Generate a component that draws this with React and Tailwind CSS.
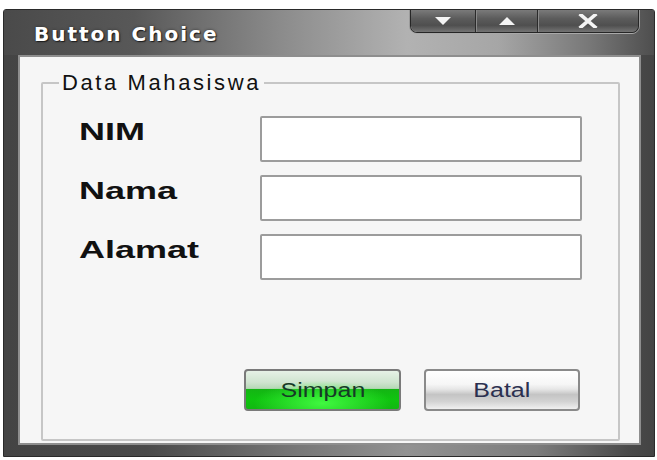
import { useState } from "react";

// Small window-chrome glyphs for the caption buttons
const ArrowDown = () => (
  <svg width="16" height="9" viewBox="0 0 16 9">
    <polygon points="0,0 16,0 8,8" fill="#f4f4f4" />
  </svg>
);

const ArrowUp = () => (
  <svg width="16" height="9" viewBox="0 0 16 9">
    <polygon points="0,8 16,8 8,0" fill="#f4f4f4" />
  </svg>
);

const CloseX = () => (
  <svg width="20" height="14" viewBox="0 0 20 14">
    <path d="M3 1 L17 13 M17 1 L3 13" stroke="#f4f4f4" strokeWidth="3.6" strokeLinecap="square" />
  </svg>
);

const CaptionButton = ({ width, children, first }) => (
  <button
    className={`flex items-center justify-center h-full bg-[linear-gradient(180deg,#7a7a7a_0%,#5b5b5b_40%,#4f4f4f_70%,#747474_100%)] ${
      first ? "" : "border-l border-[#2a2a2a] shadow-[inset_1px_0_0_#8a8a8a]"
    } ${width}`}
  >
    {children}
  </button>
);

const Field = ({ label, value, onChange }) => (
  <>
    <label className="mt-[4px] text-[24px] leading-[24px] font-bold text-[#111] font-['Liberation_Sans',Arial,sans-serif]">
      <span className="inline-block origin-left scale-x-150">{label}</span>
    </label>
    <input
      value={value}
      onChange={(e) => onChange(e.target.value)}
      className="h-[46px] w-[322px] bg-white border-2 border-[#9c9c9c] rounded-[2px] px-2 text-[16px] outline-none"
    />
  </>
);

export default function App() {
  const [nim, setNim] = useState("");
  const [nama, setNama] = useState("");
  const [alamat, setAlamat] = useState("");

  return (
    <div className="w-[657px] h-[460px] bg-white pt-[9px] pl-[3px] overflow-hidden">
      {/* window frame */}
      <div className="w-[652px] h-[448px] flex flex-col border border-[#2a2a2a] rounded-t-[3px] bg-[linear-gradient(90deg,#444_0%,#4a4a4a_22%,#777_45%,#929292_62%,#7c7c7c_82%,#4a4a4a_96%,#444_100%)]">
        {/* title bar */}
        <div className="h-[45px] shrink-0 flex items-start justify-between bg-[linear-gradient(90deg,#4a4a4a_0%,#585858_20%,#8a8a8a_42%,#b2b2b2_62%,#a6a6a6_76%,#787878_90%,#4e4e4e_100%)]">
          <div className="pl-[30px] pt-[12px] text-[20px] leading-[24px] font-bold tracking-[2px] text-white font-['DejaVu_Sans',Verdana,sans-serif] [text-shadow:1px_1px_1px_#1c1c1c,0_0_3px_#333]">
            Button Choice
          </div>
          <div className="mr-[15px] h-[23px] flex border border-t-0 border-[#262626] rounded-b-[7px] overflow-hidden shadow-[0_1px_0_#a9a9a9,1px_0_0_#9a9a9a,-1px_0_0_#9a9a9a]">
            <CaptionButton width="w-[64px]" first>
              <ArrowDown />
            </CaptionButton>
            <CaptionButton width="w-[62px]">
              <ArrowUp />
            </CaptionButton>
            <CaptionButton width="w-[101px]">
              <CloseX />
            </CaptionButton>
          </div>
        </div>

        {/* client area */}
        <div className="flex-1 min-h-0 ml-[14px] mr-[13px] mb-[11px] border-2 border-[#8e8e8e] bg-[#f6f6f6] flex flex-col pt-[16px] pl-[21px] pr-[19px] pb-[2px]">
          <fieldset className="flex-1 min-h-0 flex flex-col border-2 border-[#c6c6c6] rounded-[2px]">
            <legend className="ml-[16px] px-[3px] text-[22px] leading-[20px] tracking-[2.6px] text-[#111] font-['Liberation_Sans',Arial,sans-serif]">
              Data Mahasiswa
            </legend>

            <div className="mt-[23px] pl-[36px] grid grid-cols-[181px_322px] gap-y-[13px] items-start">
              <Field label="NIM" value={nim} onChange={setNim} />
              <Field label="Nama" value={nama} onChange={setNama} />
              <Field label="Alamat" value={alamat} onChange={setAlamat} />
            </div>

            <div className="mt-auto mb-[28px] pr-[38px] flex justify-end gap-[23px] font-['Liberation_Sans',Arial,sans-serif] text-[20px] leading-[24px]">
              <button className="w-[157px] h-[42px] rounded-[4px] border-2 border-[#7a7a7a] text-[#163a26] bg-[radial-gradient(ellipse_45%_60%_at_50%_85%,rgba(70,255,70,0.9),rgba(70,255,70,0)_100%),linear-gradient(180deg,#e6f1e6_0%,#cfe4cf_30%,#b6d8b6_46%,#14b414_47%,#0fc40f_75%,#12b812_100%)]">
                <span className="inline-block scale-x-125">Simpan</span>
              </button>
              <button className="w-[156px] h-[42px] rounded-[4px] border-2 border-[#8a8a8a] text-[#2b3050] bg-[linear-gradient(180deg,#ffffff_0%,#f6f6f6_35%,#e6e6e6_48%,#c4c4c4_62%,#d2d2d2_80%,#f0f0f0_100%)]">
                <span className="inline-block scale-x-125">Batal</span>
              </button>
            </div>
          </fieldset>
        </div>
      </div>
    </div>
  );
}
